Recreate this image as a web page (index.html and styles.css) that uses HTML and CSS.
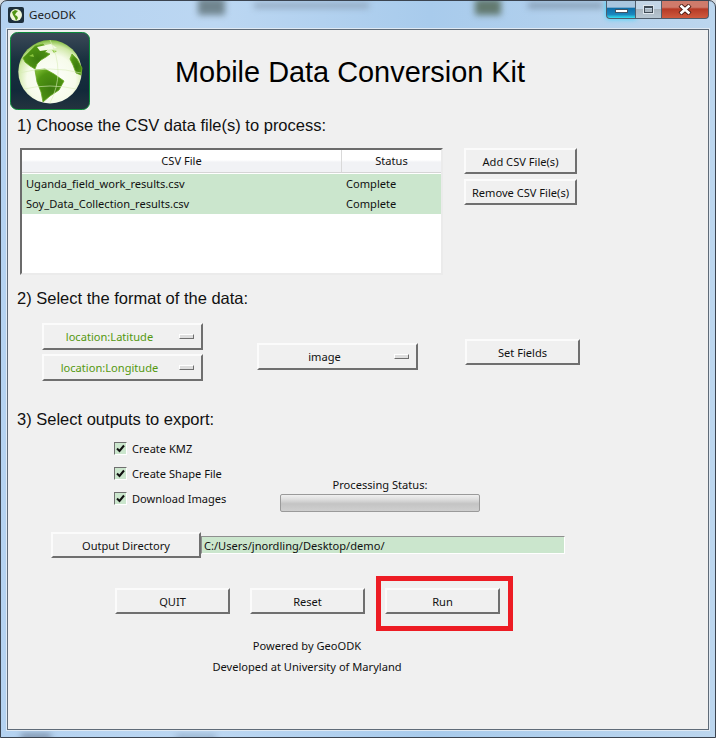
FILE: index.html
```html
<!DOCTYPE html>
<html lang="en">
<head>
    <meta charset="UTF-8">
    <meta name="viewport" content="width=device-width, initial-scale=1.0">
    <title>GeoODK</title>
    <link rel="stylesheet" href="styles.css">
</head>
<body>
    <div class="window">
        <!-- Blurred desktop showing through the glass frame -->
        <div class="glass glass-icon-a"></div>
        <div class="glass glass-text-a"></div>
        <div class="glass glass-icon-b"></div>
        <div class="glass glass-text-b"></div>
        <div class="glass glass-task-a"></div>
        <div class="glass glass-task-b"></div>

        <!-- Title bar -->
        <div class="titlebar">
            <svg class="app-icon" viewBox="0 0 16 16" aria-hidden="true">
                <rect width="16" height="16" rx="2" fill="#1d2f3c"/>
                <circle cx="8" cy="8" r="6" fill="#eef7d8"/>
                <path d="M4 5 L7 3 L10 4 L8 6 L7 8 L9 9 L10 11 L8 14 L7 11 L5 8Z" fill="#4f9412"/>
            </svg>
            <span class="app-name">GeoODK</span>
            <div class="controls">
                <div class="ctl ctl-min"><span class="min-glyph"></span></div>
                <div class="ctl ctl-max"><span class="max-glyph"></span></div>
                <div class="ctl ctl-close">
                    <svg width="14" height="11" viewBox="0 0 14 11" aria-hidden="true">
                        <path d="M2 1 L12 10 M12 1 L2 10" stroke="#4a1a12" stroke-width="4.4"/>
                        <path d="M2.5 1.5 L11.5 9.5 M11.5 1.5 L2.5 9.5" stroke="#fff" stroke-width="2.6"/>
                    </svg>
                </div>
            </div>
        </div>

        <div class="client">
            <!-- Logo and heading -->
            <div class="header">
                <svg class="logo" viewBox="0 0 80 78" aria-hidden="true">
                    <defs>
                        <linearGradient id="tile" x1="0" y1="0" x2="0" y2="1">
                            <stop offset="0" stop-color="#3c4a58"/>
                            <stop offset="0.35" stop-color="#1a3140"/>
                            <stop offset="0.75" stop-color="#12293a"/>
                            <stop offset="1" stop-color="#24333f"/>
                        </linearGradient>
                        <radialGradient id="sphere" cx="0.52" cy="0.62" r="0.62">
                            <stop offset="0" stop-color="#ffffff"/>
                            <stop offset="0.62" stop-color="#f6fbea"/>
                            <stop offset="0.86" stop-color="#cfe8a6"/>
                            <stop offset="1" stop-color="#7db93a"/>
                        </radialGradient>
                        <radialGradient id="land" cx="0.55" cy="0.6" r="0.7">
                            <stop offset="0" stop-color="#3c7a0e"/>
                            <stop offset="0.7" stop-color="#4f9412"/>
                            <stop offset="1" stop-color="#78b82e"/>
                        </radialGradient>
                    </defs>
                    <rect x="0.5" y="0.5" width="79" height="77" rx="7" fill="url(#tile)" stroke="#0c8a3a"/>
                    <circle cx="40" cy="39.7" r="31.7" fill="url(#sphere)"/>
                    <g fill="url(#land)" stroke="#6aa824" stroke-width="0.8" stroke-linejoin="round">
                        <path d="M13 26 L20 19 L25 14 L33 12 L38 17 L35 20 L40 22 L36 25 L31 28 L27 32 L25 37 L20 34 L15 30Z"/>
                        <path d="M25 38 L35 37 L44 42 L54 49 L49 58 L40 64 L33 70 L31 60 L27 50Z"/>
                        <path d="M62 22 L67 27 L72 36 L71 43 L66 41 L63 33 L60 27Z"/>
                    </g>
                    <path d="M27 15 L41 12 L47 16 L37 18 L30 19Z" fill="#f4fae6"/>
                    <path d="M42 18 L47 19 L44 21Z M19 24 L23 22 L24 25Z" fill="#8cc63f"/>
                    <path d="M9 41 Q40 33 71 41 M40 8 Q56 40 40 71 M14 57 Q40 51 66 57" fill="none" stroke="#d8edb8" stroke-width="0.6"/>
                </svg>
                <h1>Mobile Data Conversion Kit</h1>
            </div>

            <!-- Step 1 -->
            <h2 class="step step-one">1) Choose the CSV data file(s) to process:</h2>
            <div class="files-row">
                <div class="file-table">
                    <div class="table-head">
                        <div class="col-file">CSV File</div>
                        <div class="col-status">Status</div>
                    </div>
                    <div class="table-row">
                        <span class="cell-file">Uganda_field_work_results.csv</span>
                        <span class="cell-status">Complete</span>
                    </div>
                    <div class="table-row">
                        <span class="cell-file">Soy_Data_Collection_results.csv</span>
                        <span class="cell-status">Complete</span>
                    </div>
                </div>
                <div class="file-buttons">
                    <button class="btn btn-file">Add CSV File(s)</button>
                    <button class="btn btn-file">Remove CSV File(s)</button>
                </div>
            </div>

            <!-- Step 2 -->
            <h2 class="step step-two">2) Select the format of the data:</h2>
            <div class="format-row">
                <div class="latlon">
                    <div class="btn menu menu-green"><span class="menu-label">location:Latitude</span><span class="indicator"></span></div>
                    <div class="btn menu menu-green"><span class="menu-label">location:Longitude</span><span class="indicator"></span></div>
                </div>
                <div class="btn menu menu-image"><span class="menu-label">image</span><span class="indicator"></span></div>
                <button class="btn btn-fields">Set Fields</button>
            </div>

            <!-- Step 3 -->
            <h2 class="step step-three">3) Select outputs to export:</h2>
            <div class="outputs-row">
                <div class="checks">
                    <label class="check"><span class="box"><svg width="9" height="9" viewBox="0 0 9 9" aria-hidden="true"><path d="M1 4.5 L3.5 7 L8 1.5" fill="none" stroke="#111" stroke-width="2"/></svg></span>Create KMZ</label>
                    <label class="check"><span class="box"><svg width="9" height="9" viewBox="0 0 9 9" aria-hidden="true"><path d="M1 4.5 L3.5 7 L8 1.5" fill="none" stroke="#111" stroke-width="2"/></svg></span>Create Shape File</label>
                    <label class="check"><span class="box"><svg width="9" height="9" viewBox="0 0 9 9" aria-hidden="true"><path d="M1 4.5 L3.5 7 L8 1.5" fill="none" stroke="#111" stroke-width="2"/></svg></span>Download Images</label>
                </div>
                <div class="status">
                    <div class="status-label">Processing Status:</div>
                    <div class="progress"></div>
                </div>
            </div>

            <div class="dir-row">
                <button class="btn btn-dir">Output Directory</button>
                <div class="dir-path">C:/Users/jnordling/Desktop/demo/</div>
            </div>

            <div class="action-row">
                <button class="btn btn-action">QUIT</button>
                <button class="btn btn-action">Reset</button>
                <div class="run-wrap">
                    <button class="btn btn-action">Run</button>
                    <div class="highlight"></div>
                </div>
            </div>

            <div class="footer">
                <p>Powered by GeoODK</p>
                <p>Developed at University of Maryland</p>
            </div>
        </div>
    </div>
</body>
</html>
```

FILE: styles.css
```css
/* Page and window frame */
html, body {
    margin: 0;
    padding: 0;
}

body {
    width: 716px;
    height: 738px;
    overflow: hidden;
    background: #d8dde2;
}

.window {
    position: relative;
    width: 716px;
    height: 738px;
    box-sizing: border-box;
    padding: 0 6px 7px 6px;
    overflow: hidden;
    border: 1px solid #3b4450;
    border-radius: 7px 7px 0 0;
    background: linear-gradient(to right, #b4d2f0, #bcd7f2 30%, #a8cbec 60%, #bcd6ee);
    display: flex;
    flex-direction: column;
    font-family: "Noto Sans", sans-serif;
    font-size: 11.1px;
    color: #111;
}

/* Blurred shapes behind the glass */
.glass {
    position: absolute;
    filter: blur(3px);
}

.glass-icon-a { left: 197px; top: -3px; width: 27px; height: 17px; background: #70858f; }
.glass-text-a { left: 253px; top: 2px; width: 115px; height: 5px; background: #8fa5bb; }
.glass-icon-b { left: 474px; top: -2px; width: 26px; height: 16px; background: #62796f; }
.glass-text-b { left: 527px; top: 2px; width: 75px; height: 5px; background: #7f95ab; }
.glass-task-a { left: 20px; bottom: -2px; width: 30px; height: 5px; background: #6f8199; }
.glass-task-b { left: 175px; bottom: -2px; width: 40px; height: 4px; background: #8ba3bd; }

/* Title bar */
.titlebar {
    position: relative;
    height: 28px;
    display: flex;
    align-items: flex-start;
    flex: none;
}

.app-icon {
    width: 16px;
    height: 16px;
    margin: 6px 0 0 1px;
}

.app-name {
    margin: 5px 0 0 5px;
    font-size: 11.6px;
    line-height: 18px;
    color: #1a1a1a;
}

.controls {
    margin-left: auto;
    display: flex;
    height: 19px;
    margin-top: -1px;
}

.ctl {
    box-sizing: border-box;
    height: 19px;
    display: flex;
    align-items: center;
    justify-content: center;
    border: 1px solid #4f5d6c;
    border-top: none;
    border-left: none;
}

.ctl-min {
    width: 30px;
    border-left: 1px solid #4f5d6c;
    border-radius: 0 0 0 4px;
    background: linear-gradient(to bottom, #a9c6df 0, #a9c6df 40%, #0f6ea8 45%, #1a86bd 80%, #36e0f0 100%);
    box-shadow: 0 0 5px #33d6ff;
}

.ctl-max {
    width: 26px;
    background: linear-gradient(to bottom, #c3d5e6 0, #c3d5e6 48%, #a9b5bf 52%, #b7c6d2 100%);
}

.ctl-close {
    width: 47px;
    border-radius: 0 0 4px 0;
    background: linear-gradient(to bottom, #cf7b6b 0, #cf7b6b 40%, #b63a26 50%, #cf5a3e 100%);
}

.min-glyph {
    display: block;
    width: 11px;
    height: 2px;
    margin-top: 3px;
    background: #fff;
    border: 1px solid #3f5566;
}

.max-glyph {
    display: block;
    width: 7px;
    height: 4px;
    border: 1px solid #3f4a55;
    outline: 1px solid #dfe7ee;
    border-top-width: 2px;
}

/* Client area */
.client {
    flex: 1;
    position: relative;
    background: #f0f0f0;
    border: 1px solid #5f6b78;
    box-shadow: 0 0 0 1px #dfe9f3;
    display: flex;
    flex-direction: column;
}

.header {
    display: flex;
    align-items: flex-start;
    height: 80px;
    margin-top: 2px;
    margin-left: 2px;
}

.logo {
    width: 80px;
    height: 78px;
    flex: none;
}

h1 {
    margin: 22px 0 0 85px;
    font-family: "Liberation Sans", sans-serif;
    font-weight: normal;
    font-size: 28.9px;
    line-height: 36px;
    color: #000;
}

.step {
    margin: 0 0 0 9px;
    font-family: "Liberation Sans", sans-serif;
    font-weight: normal;
    font-size: 16.5px;
    line-height: 20px;
    color: #111;
}

.step-one { margin-top: 3px; }
.step-two { margin-top: 13px; }
.step-three { margin-top: 28px; }

/* Raised Tk style widgets */
.btn {
    box-sizing: border-box;
    padding: 0;
    background: #f0f0f0;
    border-style: solid;
    border-width: 2px;
    border-color: #fbfbfb #6f6f6f #6f6f6f #fbfbfb;
    font-family: "Noto Sans", sans-serif;
    font-size: 11.1px;
    color: #111;
    text-align: center;
}

/* Step 1 */
.files-row {
    display: flex;
    align-items: flex-start;
    margin: 13px 0 0 12px;
}

.file-table {
    box-sizing: border-box;
    width: 423px;
    height: 127px;
    background: #fff;
    border-style: solid;
    border-width: 2px;
    border-color: #6b6b6b #ebebeb #ebebeb #6b6b6b;
}

.table-head {
    display: flex;
    height: 22px;
    line-height: 22px;
    border-bottom: 1px solid #d5d5d5;
    margin-bottom: 1px;
    background: linear-gradient(to bottom, #ffffff 45%, #f1f2f5 55%, #f1f2f5 100%);
    text-align: center;
}

.col-file {
    width: 320px;
    box-sizing: border-box;
    border-right: 1px solid #d9d9d9;
}

.col-status { flex: 1; }

.table-row {
    display: flex;
    height: 20px;
    line-height: 20px;
    background: #cbe6cd;
}

.cell-file {
    width: 324px;
    padding-left: 4px;
    box-sizing: border-box;
}

.file-buttons {
    display: flex;
    flex-direction: column;
    gap: 5px;
    margin-left: 21px;
}

.btn-file {
    width: 113px;
    height: 26px;
}

/* Step 2 */
.format-row {
    display: flex;
    align-items: flex-start;
    margin: 15px 0 0 34px;
}

.latlon {
    display: flex;
    flex-direction: column;
    gap: 4px;
}

.menu {
    position: relative;
    width: 161px;
    height: 27px;
    line-height: 23px;
    display: flex;
    align-items: center;
    padding-left: 6px;
    padding-right: 7px;
}

.menu-label {
    flex: 1;
    padding-right: 10px;
    text-align: center;
}

.menu-green { color: #54980f; }

.menu-image {
    margin: 20px 0 0 54px;
}

.indicator {
    flex: none;
    width: 15px;
    height: 5px;
    box-sizing: border-box;
    border-style: solid;
    border-width: 1px;
    border-color: #fff #6f6f6f #6f6f6f #fff;
    background: #dedede;
}

.btn-fields {
    width: 115px;
    height: 26px;
    margin: 16px 0 0 47px;
}

/* Step 3 */
.outputs-row {
    display: flex;
    align-items: flex-start;
    margin: 9px 0 0 106px;
}

.checks {
    display: flex;
    flex-direction: column;
    gap: 5px;
    width: 166px;
}

.check {
    display: flex;
    align-items: center;
    height: 20px;
}

.box {
    box-sizing: border-box;
    width: 13px;
    height: 13px;
    margin-right: 5px;
    display: flex;
    align-items: center;
    justify-content: center;
    background: #cbe6cd;
    border-style: solid;
    border-width: 1px;
    border-color: #6f6f6f #fff #fff #6f6f6f;
}

.status {
    width: 200px;
    margin-top: 37px;
    text-align: center;
}

.status-label {
    line-height: 19px;
}

.progress {
    box-sizing: border-box;
    height: 18px;
    border: 1px solid #9a9a9a;
    border-radius: 2px;
    background: linear-gradient(to bottom, #f0f0f0 0, #dcdcdc 30%, #c4c4c4 55%, #cfcfcf 100%);
}

/* Output directory */
.dir-row {
    display: flex;
    align-items: center;
    margin: 20px 0 0 43px;
}

.btn-dir {
    width: 150px;
    height: 26px;
}

.dir-path {
    box-sizing: border-box;
    width: 364px;
    height: 18px;
    line-height: 17px;
    padding-left: 2px;
    background: #cbe6cd;
    border-style: solid;
    border-width: 1px;
    border-color: #8f8f8f #fff #fff #8f8f8f;
}

/* Action buttons */
.action-row {
    display: flex;
    gap: 20px;
    margin: 30px 0 0 107px;
}

.btn-action {
    display: block;
    width: 115px;
    height: 26px;
}

.run-wrap {
    position: relative;
}

.highlight {
    position: absolute;
    left: -9px;
    right: -13px;
    top: -12px;
    bottom: -17px;
    border: 5px solid #ed1c24;
}

/* Footer */
.footer {
    width: 300px;
    margin: 21px 0 0 149px;
    text-align: center;
}

.footer p {
    margin: 0;
    line-height: 21px;
}
```
